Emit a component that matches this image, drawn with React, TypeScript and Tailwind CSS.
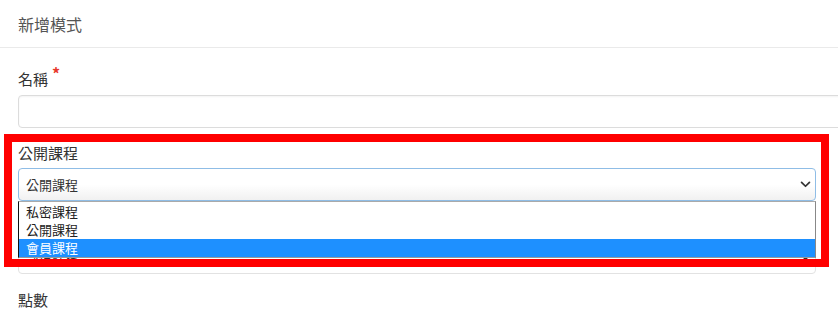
import { ReactNode } from 'react'

const font = { fontFamily: '"Noto Sans CJK TC", "Noto Sans", sans-serif' }

function Chevron() {
  return (
    <svg viewBox="0 0 12 8" className="h-[7px] w-[11px]" aria-hidden>
      <path d="M1.5 1.5 6 6l4.5-4.5" fill="none" stroke="#333" strokeWidth="2" strokeLinecap="round" strokeLinejoin="round" />
    </svg>
  )
}

function Label({ children, className = '' }: { children: ReactNode; className?: string }) {
  return <div className={`h-[22px] text-[15px] leading-[22px] text-[#333] ${className}`}>{children}</div>
}

function Select({ value, focused }: { value: string; focused?: boolean }) {
  return (
    <div
      className={`flex h-[33px] w-[798px] items-center justify-between rounded-[4px] border pl-[7px] pr-[4px] ${
        focused
          ? 'border-[#8fbde6] bg-gradient-to-b from-white via-white to-[#f1f1f1]'
          : 'border-[#e2e2e2] bg-white'
      }`}
    >
      <span className="text-[13px] text-[#333]">{value}</span>
      <Chevron />
    </div>
  )
}

export default function App() {
  const options = ['私密課程', '公開課程', '會員課程']
  return (
    <div className="relative h-[316px] w-[838px] overflow-hidden bg-white" style={font}>
      <header className="flex h-[48px] items-center border-b border-[#eaeaea] px-[18px]">
        <h1 className="text-[16px] font-normal text-[#555]">新增模式</h1>
      </header>

      <div className="pl-[18px] pt-[20px]">
        <Label className="mb-[5px]">
          名稱<span className="relative -top-[5px] ml-[4px] text-[16px] font-bold leading-none text-[#e8382c]">*</span>
        </Label>
        <div className="h-[33px] w-[840px] rounded-[4px] border border-[#dcdcdc] bg-white shadow-[inset_0_1px_2px_rgba(0,0,0,0.05)]" />

        <Label className="mb-[4px] mt-[14px]">公開課程</Label>
        <Select value="公開課程" focused />

        <Label className="mb-[4px] mt-[14px]">課程類型</Label>
        <Select value="部份課程" />

        <Label className="mt-[15px]">點數</Label>
      </div>

      {/* open native list */}
      <div className="absolute left-[18px] top-[201px] w-[798px] border border-l-[#111] border-r-[#888] border-t-[#aaa] border-b-[#999] bg-white pt-[1px]">
        {options.map((o, i) => (
          <div
            key={o}
            className={`h-[18px] pl-[7px] text-[13px] leading-[18px] ${
              i === 2 ? 'bg-[#1e90ff] text-white' : 'text-[#222]'
            }`}
          >
            {o}
          </div>
        ))}
      </div>

      {/* highlight annotation */}
      <div className="pointer-events-none absolute left-[4px] top-[134px] h-[133px] w-[825px] border-[8px] border-[#ff0000]" />
    </div>
  )
}
